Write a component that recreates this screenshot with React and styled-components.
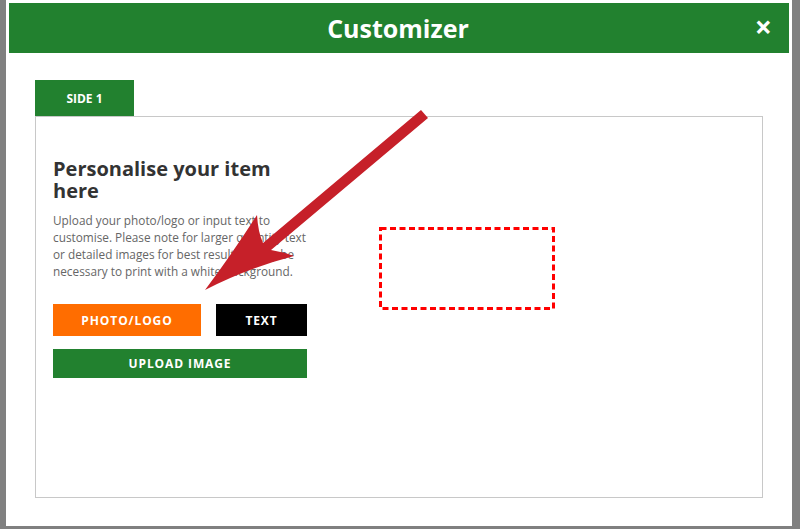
import React from 'react'
import styled, { createGlobalStyle } from 'styled-components'

const Global = createGlobalStyle`
  html, body {
    margin: 0;
    padding: 0;
    background: #808080;
    font-family: "Open Sans", "Liberation Sans", sans-serif;
  }
`

const Overlay = styled.div`
  width: 800px;
  height: 529px;
  overflow: hidden;
  background: #808080;
`

const Modal = styled.div`
  position: relative;
  margin-left: 6px;
  width: 786px;
  height: 526px;
  box-sizing: border-box;
  background: #fff;
  padding: 3px 3px 0;
`

const Header = styled.div`
  height: 50px;
  background: #22812f;
  display: flex;
  align-items: center;
  justify-content: center;
  position: relative;
  color: #fff;
`

const Title = styled.h1`
  margin: 0 0 0 -2px;
  font-size: 25px;
  font-weight: 700;
  line-height: 1;
`

const Close = styled.span`
  position: absolute;
  right: 17px;
  top: 9px;
  font-size: 30px;
  font-weight: 700;
  line-height: 1;
`

const Body = styled.div`
  padding: 27px 26px 0;
`

const Tabs = styled.div`
  display: flex;
`

const Tab = styled.div`
  width: 99px;
  height: 36px;
  background: ${p => (p.active ? '#22812f' : '#eee')};
  color: #fff;
  font-size: 12px;
  font-weight: 700;
  display: flex;
  align-items: center;
  justify-content: center;
`

const Panel = styled.div`
  height: 382px;
  box-sizing: border-box;
  border: 1px solid #c8c8c8;
  display: flex;
`

const Side = styled.div`
  width: 254px;
  margin-left: 17px;
  padding-top: 41px;
`

const Heading = styled.h2`
  margin: 0;
  font-size: 20px;
  line-height: 22px;
  font-weight: 700;
  color: #333;
`

const Intro = styled.p`
  margin: 10px -8px 0 0;
  font-size: 11.8px;
  line-height: 17px;
  color: #666;
`

const ButtonRow = styled.div`
  display: flex;
  gap: 15px;
  margin-top: 24px;
`

const Button = styled.button`
  border: 0;
  height: ${p => p.h || 32}px;
  width: ${p => (p.w ? p.w + 'px' : '100%')};
  background: ${p => p.bg};
  color: #fff;
  font-family: inherit;
  font-size: 12px;
  font-weight: 700;
  letter-spacing: 0.9px;
  display: flex;
  align-items: center;
  justify-content: center;
  padding: 0;
`

const UploadRow = styled.div`
  margin-top: 13px;
`

const Canvas = styled.div`
  flex: 1;
  padding: 110px 0 0 72px;
`

const PrintArea = styled.svg`
  display: block;
`

const Arrow = styled.svg`
  position: absolute;
  left: -6px;
  top: 0;
  pointer-events: none;
`

export default function App() {
  return (
    <Overlay>
      <Global />
      <Modal>
        <Header>
          <Title>Customizer</Title>
          <Close>×</Close>
        </Header>
        <Body>
          <Tabs>
            <Tab active>SIDE 1</Tab>
          </Tabs>
          <Panel>
            <Side>
              <Heading>Personalise your item here</Heading>
              <Intro>
                Upload your photo/logo or input text to customise. Please note for larger
                quantity text or detailed images for best results it may be necessary to
                print with a white background.
              </Intro>
              <ButtonRow>
                <Button bg="#ff6d00" w={148}>PHOTO/LOGO</Button>
                <Button bg="#000" w={91}>TEXT</Button>
              </ButtonRow>
              <UploadRow>
                <Button bg="#22812f" h={29}>UPLOAD IMAGE</Button>
              </UploadRow>
            </Side>
            <Canvas>
              <PrintArea width="176" height="83">
                <rect x="1.5" y="1.5" width="173" height="80" fill="none" stroke="#ff0000"
                  strokeWidth="3" strokeDasharray="6 3.5" />
              </PrintArea>
            </Canvas>
          </Panel>
        </Body>
        <Arrow width="800" height="529" viewBox="0 0 800 529">
          <path
            fill="#c62029"
            d="M205 290 Q232 254 257 215 Q258 232 263 243 L421 110 L428 118 L271 250 Q283 252 294 256 Q248 268 205 290 Z"
          />
        </Arrow>
      </Modal>
    </Overlay>
  )
}
